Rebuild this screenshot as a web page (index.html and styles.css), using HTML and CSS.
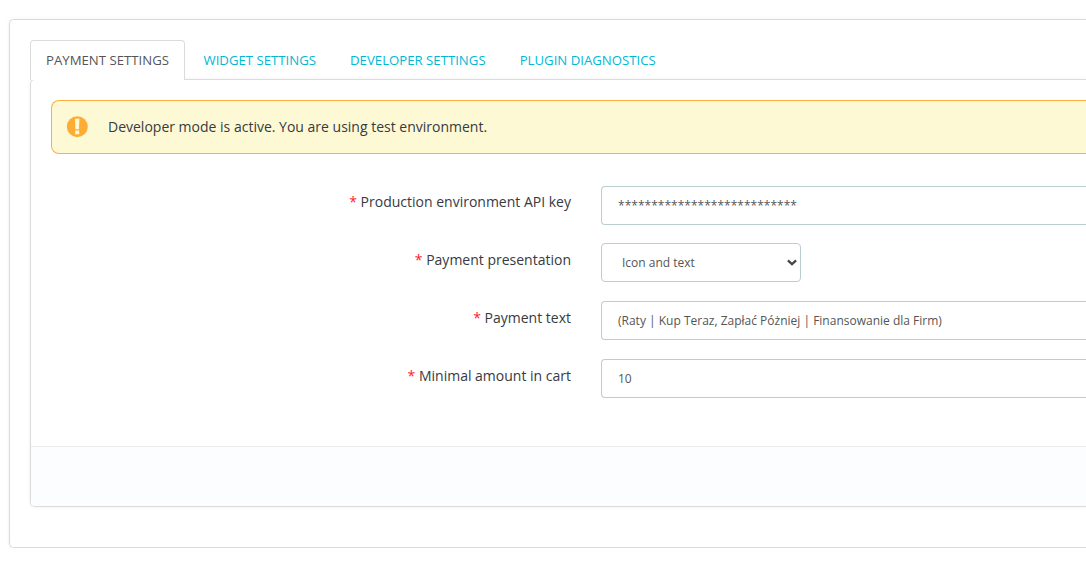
FILE: index.html
```html
<!DOCTYPE html>
<html lang="en">
<head>
<meta charset="utf-8">
<title>Payment settings</title>
<link rel="stylesheet" href="styles.css">
</head>
<body>
<main class="card">
  <nav class="tabs">
    <a class="tab tab-active">Payment settings</a>
    <a class="tab">Widget settings</a>
    <a class="tab">Developer settings</a>
    <a class="tab">Plugin diagnostics</a>
  </nav>
  <section class="panel">
    <div class="alert">
      <svg class="alert-icon" width="22" height="22" viewBox="0 0 22 22">
        <circle cx="11.3" cy="10.7" r="10.5" fill="#fdad34"/>
        <path d="M9 2.8h4.4l-.4 10.4H9.4zM9.2 14.6h4v3.6h-4z" fill="#fffad5"/>
      </svg>
      <span>Developer mode is active. You are using test environment.</span>
    </div>
    <form class="form">
      <div class="row">
        <label class="label"><span class="required">*</span> Production environment API key</label>
        <div class="field field-key">***************************</div>
      </div>
      <div class="row row-select">
        <label class="label"><span class="required">*</span> Payment presentation</label>
        <div class="field select">
          <span>Icon and text</span>
          <svg width="10" height="7" viewBox="0 0 10 7"><path d="M.9 1.3L5 5.1l4.100-3.800" fill="none" stroke="#45494c" stroke-width="2.300"/></svg>
        </div>
      </div>
      <div class="row">
        <label class="label"><span class="required">*</span> Payment text</label>
        <div class="field">(Raty | Kup Teraz, Zapłać Póżniej | Finansowanie dla Firm)</div>
      </div>
      <div class="row">
        <label class="label"><span class="required">*</span> Minimal amount in cart</label>
        <div class="field">10</div>
      </div>
    </form>
    <footer class="panel-footer"></footer>
  </section>
</main>
</body>
</html>
```
FILE: styles.css
```css
* { box-sizing: border-box; }
body {
  margin: 0;
  padding: 19px 0 0 9px;
  background: #fff;
  color: #363a41;
  font: 14px/20px "Open Sans", sans-serif;
}
.card {
  height: 529px;
  padding: 20px 0 20px 20px;
  border: 1px solid #dbdbdb;
  border-right: 0;
  border-radius: 5px 0 0 5px;
  box-shadow: 0 0 4px rgba(0, 0, 0, 0.06);
}
.tabs {
  display: flex;
  height: 39px;
}
.tab {
  height: 39px;
  margin-right: 2px;
  padding: 0 16px;
  color: #00b8d4;
  font-size: 13.2px;
  line-height: 41px;
  text-transform: uppercase;
  white-space: nowrap;
}
.tab-active {
  position: relative;
  z-index: 1;
  height: 40px;
  margin-right: 2.5px;
  padding: 0 15px;
  border: 1px solid #dbdbdb;
  border-bottom: 0;
  border-radius: 4px 4px 0 0;
  background: #fff;
  color: #555;
  line-height: 39px;
}
.panel {
  display: flex;
  flex-direction: column;
  height: 428px;
  padding-top: 20px;
  border: 1px solid #dbdbdb;
  border-right: 0;
  border-radius: 5px 0 0 5px;
  box-shadow: 0 0 4px rgba(0, 0, 0, 0.06);
}
.alert {
  display: flex;
  align-items: center;
  gap: 20px;
  height: 54px;
  margin-left: 20px;
  padding-left: 14px;
  border: 1px solid #fbb040;
  border-right: 0;
  border-radius: 8px 0 0 8px;
  background: #fef9d5;
}
.form {
  flex: 1;
  padding-top: 32px;
}
.row {
  display: flex;
  height: 39px;
  margin-bottom: 19px;
}
.row:first-child { margin-bottom: 18px; }
.label {
  flex: 0 0 540px;
  margin-right: 30px;
  padding-top: 6px;
  text-align: right;
}
.row-select .label,
.row-select ~ .row .label { padding-top: 7px; }
.required { color: #ff1a2d; }
.field {
  flex: 1;
  padding-left: 16px;
  border: 1px solid #bbcdd2;
  border-right: 0;
  border-radius: 4px 0 0 4px;
  background: #fff;
  color: #555;
  font-size: 12px;
  line-height: 37px;
}
.field-key { letter-spacing: 0.02px; }
.select {
  display: flex;
  flex: 0 0 200px;
  align-items: center;
  justify-content: space-between;
  padding: 0 3px 0 20px;
  border-right: 1px solid #bbcdd2;
  border-radius: 4px;
}
.panel-footer {
  height: 60px;
  border-top: 1px solid #e8ebee;
  border-radius: 0 0 0 4px;
  background: #fcfdfe;
}
```
